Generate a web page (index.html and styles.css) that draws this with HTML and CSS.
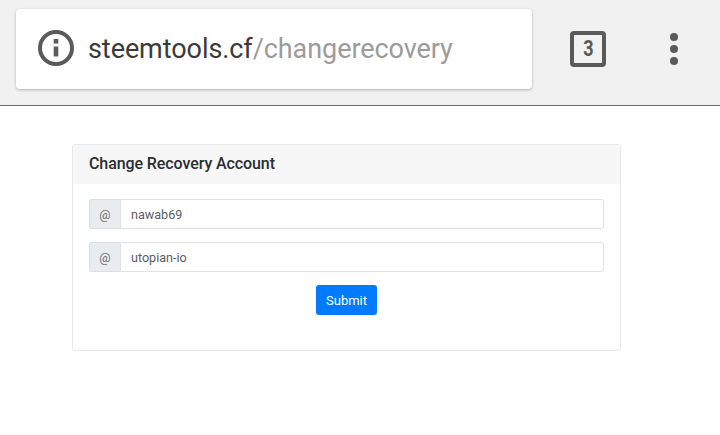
FILE: index.html
```html
<!DOCTYPE html>
<html lang="en">
<head>
<meta charset="utf-8">
<title>Change Recovery Account</title>
<link rel="stylesheet" href="styles.css">
</head>
<body>
<header class="toolbar">
  <div class="omnibox">
    <svg class="info-icon" width="36" height="36" viewBox="0 0 36 36" aria-hidden="true">
      <circle cx="18" cy="18" r="16" fill="none" stroke="#5a5a5a" stroke-width="4"/>
      <rect x="15.7" y="9" width="4.6" height="4.6" fill="#5a5a5a"/>
      <rect x="15.7" y="16.5" width="4.6" height="10" fill="#5a5a5a"/>
    </svg>
    <div class="url"><span class="host">steemtools.cf</span><span class="path">/changerecovery</span></div>
  </div>
  <div class="tab-count"><span class="tab-digit">3</span></div>
  <div class="menu-dots"><i></i><i></i><i></i></div>
</header>
<main class="page">
  <section class="card">
    <h1 class="card-header">Change Recovery Account</h1>
    <form class="card-body">
      <div class="input-group">
        <span class="prefix">@</span>
        <div class="field">nawab69</div>
      </div>
      <div class="input-group">
        <span class="prefix">@</span>
        <div class="field">utopian-io</div>
      </div>
      <div class="actions"><button type="button" class="submit">Submit</button></div>
    </form>
  </section>
</main>
</body>
</html>
```
FILE: styles.css
```css
* { box-sizing: border-box; }
html, body { margin: 0; padding: 0; }
body {
  width: 720px;
  height: 435px;
  overflow: hidden;
  background: #fff;
  font-family: Roboto, "Liberation Sans", sans-serif;
}
.toolbar {
  height: 106px;
  background: #f1f1f1;
  border-bottom: 1px solid #6a6a6a;
  display: flex;
  align-items: flex-start;
  padding: 9px 0 0 16px;
}
.omnibox {
  width: 516px;
  height: 80px;
  background: #fff;
  border-radius: 4px;
  box-shadow: 0 1px 3px rgba(0,0,0,.28);
  display: flex;
  align-items: center;
  padding-left: 22px;
  gap: 14px;
}
.info-icon { flex: none; margin-bottom: 2px; }
.url { font-size: 27px; line-height: 32px; white-space: nowrap; letter-spacing: -0.07px; }
.host { color: #3a3a3a; }
.path { color: #9b9b9b; }
.tab-count {
  width: 36px;
  height: 36px;
  margin: 22px 0 0 38px;
  border: 4px solid #5a5a5a;
  border-radius: 4px;
  color: #5a5a5a;
  display: flex;
  align-items: center;
  justify-content: center;
}
.tab-digit {
  font-size: 22px;
  line-height: 22px;
  font-weight: 700;
  transform: scaleX(.82);
}
.menu-dots {
  margin: 24px 0 0 64px;
  display: flex;
  flex-direction: column;
  gap: 4px;
}
.menu-dots i {
  display: block;
  width: 8px;
  height: 8px;
  border-radius: 50%;
  background: #5a5a5a;
}
.page { padding: 38px 0 0 72px; }
.card {
  width: 549px;
  height: 207px;
  border: 1px solid #e8e8e8;
  border-radius: 3px;
}
.card-header {
  margin: 0;
  height: 39px;
  background: #f7f7f7;
  padding: 0 16px;
  font-size: 16px;
  font-weight: 500;
  line-height: 38px;
  color: #2a2d31;
  letter-spacing: -0.09px;
}
.card-body { padding: 15px 16px 0; }
.input-group {
  display: flex;
  height: 30px;
  margin-bottom: 13px;
  font-size: 12.6px;
}
.prefix {
  width: 31px;
  background: #e9ecef;
  border: 1px solid #dcdfe2;
  border-right: 0;
  border-radius: 3px 0 0 3px;
  color: #6c7276;
  display: flex;
  align-items: center;
  justify-content: center;
}
.field {
  flex: 1;
  border: 1px solid #dfe1e4;
  border-radius: 0 3px 3px 0;
  color: #5a6066;
  line-height: 30px;
  padding-left: 10px;
}
.actions { display: flex; justify-content: center; }
.submit {
  width: 61px;
  height: 30px;
  padding: 0;
  border: 0;
  border-radius: 3px;
  background: #007bff;
  color: #fff;
  font: 400 13px Roboto, "Liberation Sans", sans-serif;
}
```
